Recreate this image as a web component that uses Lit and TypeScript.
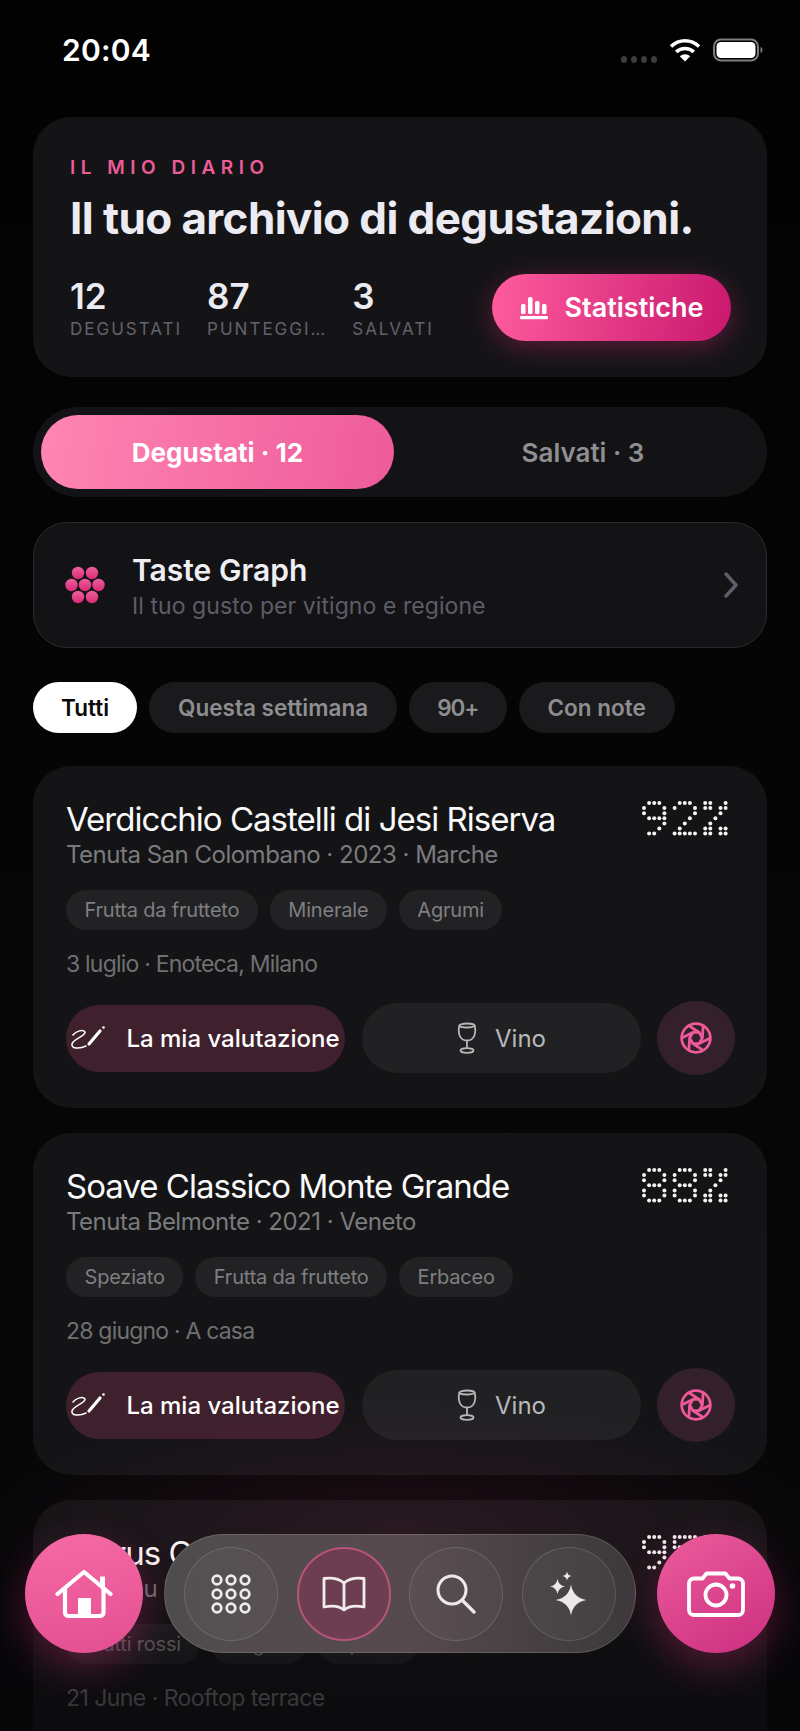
import { LitElement, html, css, svg } from "lit";
import { customElement } from "lit/decorators.js";

// dot matrix glyphs, 5 cols x 7 rows
const GLYPHS: Record<string, string[]> = {
  "9": [".###.", "#...#", "#...#", ".####", "....#", "...#.", ".##.."],
  "8": [".###.", "#...#", "#...#", ".###.", "#...#", "#...#", ".###."],
  "2": [".###.", "#...#", "....#", "...#.", "..#..", ".#...", "#####"],
  "5": ["#####", "#....", "####.", "....#", "....#", "#...#", ".###."],
  "%": ["##..#", "##.##", "...#.", "..#..", ".#...", "##.##", "##.##"],
};

interface Wine {
  name: string;
  sub: string;
  tags: string[];
  meta: string;
  score: string;
  actions: boolean;
}

const WINES: Wine[] = [
  {
    name: "Verdicchio Castelli di Jesi Riserva",
    sub: "Tenuta San Colombano · 2023 · Marche",
    tags: ["Frutta da frutteto", "Minerale", "Agrumi"],
    meta: "3 luglio · Enoteca, Milano",
    score: "92%",
    actions: true,
  },
  {
    name: "Soave Classico Monte Grande",
    sub: "Tenuta Belmonte · 2021 · Veneto",
    tags: ["Speziato", "Frutta da frutteto", "Erbaceo"],
    meta: "28 giugno · A casa",
    score: "88%",
    actions: true,
  },
  {
    // last card runs off the bottom, its buttons are never in view
    name: "Clarus Cuvée",
    sub: "Chateau Lune · 2020 · Bordeaux",
    tags: ["Frutti rossi", "Legno", "Spezie"],
    meta: "21 June · Rooftop terrace",
    score: "95%",
    actions: false,
  },
];

const star = (x: number, y: number, r: number) => {
  const k = r * 0.14;
  return `M${x} ${y - r}Q${x + k} ${y - k} ${x + r} ${y}Q${x + k} ${y + k} ${x} ${y + r}Q${x - k} ${y + k} ${x - r} ${y}Q${x - k} ${y - k} ${x} ${y - r}Z`;
};

const apertureBlades = () => {
  const lines = [];
  for (let i = 0; i < 6; i++) {
    const a = (Math.PI / 3) * i;
    const b = a + Math.PI / 3;
    const x1 = 16 + 13.5 * Math.cos(a);
    const y1 = 16 + 13.5 * Math.sin(a);
    const x2 = 16 + 6 * Math.cos(b);
    const y2 = 16 + 6 * Math.sin(b);
    const x3 = 16 + 6 * Math.cos(b + Math.PI / 3);
    const y3 = 16 + 6 * Math.sin(b + Math.PI / 3);
    lines.push(svg`<path d="M${x1} ${y1}L${x2} ${y2}L${x3} ${y3}"/>`);
  }
  return lines;
};

const icons = {
  wifi: html`<svg width="32" height="24" viewBox="0 0 32 24" fill="none" stroke="#fff" stroke-width="3.6">
    <path d="M2 8.5C10 .8 22 .8 30 8.5"/><path d="M7.2 14C12 9.4 20 9.4 24.8 14"/>
    <path d="M16 23.5L10.8 18.3C13.8 15.6 18.2 15.6 21.2 18.3Z" fill="#fff" stroke="none"/></svg>`,
  battery: html`<svg width="50" height="24" viewBox="0 0 50 24" fill="none">
    <rect x="1" y="1.5" width="44" height="21" rx="7" stroke="#7c7c7c" stroke-width="2"/>
    <rect x="3.5" y="4" width="39" height="16" rx="4.5" fill="#fff"/>
    <path d="M47.5 9v6c1.5-.5 2-1.7 2-3s-.5-2.500-2-3z" fill="#7c7c7c"/></svg>`,
  bars: html`<svg width="28" height="24" viewBox="0 0 28 24" fill="#fff">
    <rect x="1" y="8" width="4.500" height="10" rx="1.500"/><rect x="8" y="1" width="4.500" height="17" rx="1.500"/>
    <rect x="15" y="5" width="4.500" height="13" rx="1.500"/><rect x="22" y="8" width="4.500" height="10" rx="1.500"/>
    <rect x="0" y="20" width="28" height="3.200" rx="1"/></svg>`,
  grapes: html`<svg width="40" height="38" viewBox="0 0 40 38">
    <defs><linearGradient id="gr" x1="0" y1="0" x2="0" y2="1"><stop offset="0" stop-color="#ef5f9f"/><stop offset="1" stop-color="#d92a74"/></linearGradient></defs>
    <g fill="url(#gr)">
    <circle cx="13" cy="7" r="6.200"/><circle cx="27" cy="7" r="6.200"/>
    <circle cx="6.500" cy="19" r="6.200"/><circle cx="20" cy="19" r="6.200"/><circle cx="33.500" cy="19" r="6.200"/>
    <circle cx="13" cy="31" r="6.200"/><circle cx="27" cy="31" r="6.200"/></g></svg>`,
  chevron: html`<svg width="14" height="26" viewBox="0 0 14 26" fill="none" stroke="#5e5e68" stroke-width="3.400" stroke-linecap="round" stroke-linejoin="round"><path d="M2 2L12 13L2 24"/></svg>`,
  pen: html`<svg width="34" height="24" viewBox="0 0 34 24" fill="none" stroke="#fff" stroke-linecap="round">
    <path d="M2 9C5 5 12 3 14 6C15 10 2 13 1 18C0 23 9 23 15 20" stroke-width="1.500"/>
    <path d="M18 18L29 5" stroke-width="3.200"/><circle cx="32.500" cy="1.500" r="1.300" fill="#fff" stroke="none"/></svg>`,
  glass: html`<svg width="20" height="32" viewBox="0 0 20 32" fill="none" stroke="#b7b7ba" stroke-width="1.800">
    <path d="M2.500 3C0.500 11 2.500 18.500 10 18.500C17.500 18.500 19.500 11 17.500 3"/><ellipse cx="10" cy="3.500" rx="7.500" ry="2"/><path d="M10 18.500V26.500"/><ellipse cx="10" cy="28.500" rx="6.500" ry="2.400"/></svg>`,
  aperture: html`<svg width="34" height="34" viewBox="0 0 32 32" fill="none" stroke="#ef5a9b" stroke-width="2.600" stroke-linejoin="round">
    <circle cx="16" cy="16" r="13.500"/>${apertureBlades()}</svg>`,
  home: html`<svg width="58" height="50" viewBox="0 0 58 50" fill="none" stroke="#fff" stroke-width="4.200" stroke-linecap="round" stroke-linejoin="round">
    <path d="M2.500 25L29 3L55.500 25"/><path d="M10 19.500V43.500a3.500 3.500 0 0 0 3.500 3.500H45a3.500 3.500 0 0 0 3.500-3.500V19.500"/><path d="M47.500 7.500V18" stroke-width="5" stroke-linecap="butt"/>
    <rect x="23" y="29" width="13" height="17" fill="#fff" stroke="none"/></svg>`,
  camera: html`<svg width="58" height="46" viewBox="0 0 58 46" fill="none" stroke="#fff" stroke-width="3.800" stroke-linejoin="round">
    <path d="M7 7.500H15.500L19.500 2.500H38.500L42.500 7.500H51a5 5 0 0 1 5 5V39a5 5 0 0 1-5 5H7a5 5 0 0 1-5-5V12.500a5 5 0 0 1 5-5Z"/>
    <circle cx="29" cy="24" r="10.500"/><circle cx="45.500" cy="15" r="2.800" fill="#fff" stroke="none"/></svg>`,
  grid: html`<svg width="40" height="40" viewBox="0 0 40 40" fill="none" stroke="#efeaea" stroke-width="2.700">
    ${[6, 20, 34].map((y) => [6, 20, 34].map((x) => svg`<circle cx="${x}" cy="${y}" r="4.300"/>`))}</svg>`,
  book: html`<svg width="46" height="36" viewBox="0 0 46 36" fill="none" stroke="#f1ecec" stroke-width="2.800" stroke-linejoin="round" stroke-linecap="round">
    <path d="M23 7C18 2.500 10 1.500 3 2.500V31C10 29.500 18 29.500 23 34C28 29.500 36 29.500 43 31V2.500C36 1.500 28 2.500 23 7Z"/><path d="M23 7V33"/></svg>`,
  search: html`<svg width="42" height="42" viewBox="0 0 42 42" fill="none" stroke="#efeaea" stroke-width="3" stroke-linecap="round">
    <circle cx="17" cy="17" r="14"/><path d="M27.500 27.500L39 39" stroke-width="3.400"/></svg>`,
  sparkle: html`<svg width="37" height="45" viewBox="0 0 37 45" fill="#ece8e8">
    <path d="${star(21, 29, 15.5)}"/><path d="${star(7.5, 15.5, 7.5)}"/><path d="${star(17, 5, 4.6)}"/></svg>`,
};

const renderScore = (score: string) => {
  const pitch = 5.1;
  const dots = [...score].flatMap((ch, c) =>
    (GLYPHS[ch] ?? []).flatMap((row, r) =>
      [...row].map((cell, i) =>
        cell === "#" ? svg`<circle cx="${2 + (c * 6 + i) * pitch}" cy="${2 + r * pitch}" r="2"/>` : null,
      ),
    ),
  );
  return html`<div class="score">
    <svg width="88" height="36" viewBox="0 0 88 36" fill="#f4f4f4" aria-hidden="true">${dots}</svg>
    <span class="score-text">${score}</span>
  </div>`;
};

@customElement("app-root")
export class AppRoot extends LitElement {
  static styles = css`
    :host {
      display: block;
      position: relative;
      width: 800px;
      height: 1731px;
      overflow: hidden;
      background: #060607;
      font-family: Inter, "Liberation Sans", sans-serif;
      color: #fff;
    }
    .status {
      height: 117px;
      box-sizing: border-box;
      padding: 31px 37px 0 62px;
      display: flex;
      align-items: flex-start;
      background: #020203;
    }
    .time {
      font-size: 30px;
      font-weight: 600;
      line-height: 38px;
      letter-spacing: 0.2px;
      flex: 1;
    }
    .sig {
      display: flex;
      gap: 4px;
      margin: 25px 12px 0 0;
    }
    .sig i {
      width: 6px;
      height: 7px;
      border-radius: 50%;
      background: #3d3d3f;
    }
    .status svg {
      margin-top: 7px;
    }
    .status .wifi {
      margin-right: 12px;
    }
    .main {
      padding: 0 33px;
      display: flex;
      flex-direction: column;
      background: linear-gradient(#030304, #08080a);
    }
    .hero {
      height: 260px;
      box-sizing: border-box;
      padding: 41px 36px 0 37px;
      border-radius: 38px;
      background: #141417;
    }
    .eyebrow {
      font-size: 19px;
      font-weight: 600;
      line-height: 20px;
      letter-spacing: 5.5px;
      color: #ec5c98;
    }
    .headline {
      margin-top: 15px;
      font-size: 44px;
      font-weight: 700;
      line-height: 50px;
      letter-spacing: -0.6px;
      color: #ecebf1;
      white-space: nowrap;
    }
    .hero-row {
      margin-top: 31px;
      display: flex;
      align-items: center;
    }
    .stats {
      display: flex;
      gap: 25px;
      flex: 1;
    }
    .num {
      font-size: 35px;
      font-weight: 600;
      line-height: 36px;
      color: #ecebf1;
    }
    .lab {
      margin-top: 6px;
      font-size: 17px;
      line-height: 18px;
      letter-spacing: 2px;
      color: #62626c;
      white-space: nowrap;
    }
    .stat-btn {
      width: 239px;
      height: 67px;
      border-radius: 34px;
      display: flex;
      align-items: center;
      justify-content: center;
      gap: 17px;
      font-size: 27px;
      font-weight: 600;
      background: linear-gradient(100deg, #ff5c9e, #c9186e);
      box-shadow: 0 6px 26px rgba(226, 40, 120, 0.35);
    }
    .seg {
      margin-top: 30px;
      height: 90px;
      box-sizing: border-box;
      padding: 8px;
      border-radius: 45px;
      background: #131316;
      display: flex;
    }
    .seg div {
      flex: 1;
      display: flex;
      align-items: center;
      justify-content: center;
      padding-left: 13px;
      font-size: 26px;
      font-weight: 600;
      color: #8f8f92;
      border-radius: 37px;
    }
    .seg .on {
      flex: none;
      width: 353px;
      padding-left: 0;
      font-weight: 700;
      color: #fff;
      background: linear-gradient(100deg, #ff86b2, #ee5a9a);
    }
    .graph {
      margin-top: 25px;
      height: 126px;
      box-sizing: border-box;
      padding: 0 28px 0 31px;
      border: 1px solid #2b2b2f;
      border-radius: 34px;
      background: #131316;
      display: flex;
      align-items: center;
      gap: 27px;
    }
    .graph-text {
      flex: 1;
      padding-top: 4px;
    }
    .graph-title {
      font-size: 30px;
      font-weight: 600;
      line-height: 38px;
      color: #efeef3;
    }
    .graph-sub {
      font-size: 23px;
      line-height: 34px;
      letter-spacing: 0.07px;
      color: #5d5d68;
    }
    .chips {
      margin-top: 34px;
      display: flex;
      gap: 12px;
    }
    .chip {
      height: 51px;
      padding: 0 29px;
      display: flex;
      align-items: center;
      border-radius: 26px;
      background: #1a1a1c;
      color: #8e8e90;
      font-size: 22.5px;
      font-weight: 600;
    }
    .chip.on {
      background: #fff;
      color: #0a0a0a;
      padding: 0 28px;
    }
    .chip.tight {
      padding: 0 28px;
      letter-spacing: -1px;
    }
    .cards {
      margin-top: 33px;
      display: flex;
      flex-direction: column;
      gap: 25px;
    }
    .card {
      height: 342px;
      box-sizing: border-box;
      padding: 33px 32px 0 33px;
      border-radius: 38px;
      background: #141416;
    }
    .card-head {
      display: flex;
      justify-content: space-between;
      align-items: flex-start;
    }
    .name {
      font-size: 33px;
      line-height: 40px;
      letter-spacing: -0.98px;
      color: #fafafa;
    }
    .sub {
      margin-top: 1px;
      font-size: 24px;
      line-height: 30px;
      letter-spacing: -0.5px;
      color: #7b7b7d;
    }
    .score {
      position: relative;
      margin: 2px 5px 0 0;
      width: 88px;
      height: 36px;
    }
    .score-text {
      position: absolute;
      inset: 0;
      font-size: 30px;
      line-height: 36px;
      color: transparent;
      white-space: nowrap;
    }
    .tags {
      margin-top: 20px;
      display: flex;
      gap: 12px;
    }
    .tag {
      height: 40px;
      padding: 0 18.5px;
      display: flex;
      align-items: center;
      border-radius: 20px;
      background: #222224;
      color: #7f7f81;
      font-size: 20px;
      letter-spacing: -0.2px;
    }
    .meta {
      margin-top: 19px;
      font-size: 23px;
      line-height: 30px;
      letter-spacing: -0.8px;
      color: #707072;
    }
    .card:last-child .meta {
      letter-spacing: -0.55px;
    }
    .actions {
      margin-top: 22px;
      height: 74px;
      display: flex;
      align-items: center;
      gap: 17px;
    }
    .act {
      width: 279px;
      display: flex;
      align-items: center;
      justify-content: center;
      font-size: 24px;
      border-radius: 36px;
      white-space: nowrap;
    }
    .rate {
      height: 67px;
      gap: 21px;
      background: #3f202d;
      font-weight: 500;
      color: #fff;
    }
    .wine {
      height: 70px;
      gap: 18px;
      background: #212123;
      color: #b9b9bb;
    }
    .shot {
      margin-left: -1px;
      width: 78px;
      height: 74px;
      border-radius: 50%;
      background: #33202a;
      display: flex;
      align-items: center;
      justify-content: center;
    }
    .fade {
      position: absolute;
      left: 0;
      right: 0;
      bottom: 0;
      height: 340px;
      pointer-events: none;
      background: radial-gradient(ellipse 420px 130px at 50% 140px, rgba(226, 60, 120, 0.1), transparent),
        linear-gradient(rgba(6, 6, 8, 0) 50%, rgba(6, 6, 8, 0.4) 75%, rgba(6, 6, 8, 0.6));
    }
    .nav {
      position: absolute;
      left: 25px;
      right: 25px;
      top: 1534px;
      display: flex;
      justify-content: space-between;
    }
    .fab {
      width: 118px;
      height: 119px;
      border-radius: 50%;
      display: flex;
      align-items: center;
      justify-content: center;
    }
    .fab.l {
      background: linear-gradient(170deg, #f66aa4, #e34f92);
      box-shadow: 0 14px 40px rgba(226, 50, 125, 0.32);
    }
    .fab.r {
      background: linear-gradient(150deg, #ec5c9c, #cc2f80);
      box-shadow: 0 14px 40px rgba(226, 50, 125, 0.32);
    }
    .dock {
      width: 472px;
      height: 119px;
      box-sizing: border-box;
      border-radius: 60px;
      padding: 0 19px;
      display: flex;
      align-items: center;
      justify-content: space-between;
      border: 1px solid rgba(255, 255, 255, 0.14);
      background: linear-gradient(90deg, #4f4c4d, #574a4f 50%, #3b393b);
    }
    .dock div {
      width: 94px;
      height: 94px;
      box-sizing: border-box;
      border-radius: 50%;
      display: flex;
      align-items: center;
      justify-content: center;
      border: 1.5px solid rgba(255, 255, 255, 0.13);
      background: rgba(255, 255, 255, 0.03);
    }
    .dock .on {
      border: 2px solid #b65578;
      background: #6d3d52;
    }
  `;

  renderCard(w: Wine) {
    return html`<article class="card">
      <div class="card-head">
        <div>
          <div class="name">${w.name}</div>
          <div class="sub">${w.sub}</div>
        </div>
        ${renderScore(w.score)}
      </div>
      <div class="tags">${w.tags.map((t) => html`<span class="tag">${t}</span>`)}</div>
      <div class="meta">${w.meta}</div>
      ${w.actions
        ? html`<div class="actions">
            <div class="act rate">${icons.pen}<span>La mia valutazione</span></div>
            <div class="act wine">${icons.glass}<span>Vino</span></div>
            <div class="shot">${icons.aperture}</div>
          </div>`
        : null}
    </article>`;
  }

  render() {
    return html`
      <div class="status">
        <div class="time">20:04</div>
        <div class="sig"><i></i><i></i><i></i><i></i></div>
        <span class="wifi">${icons.wifi}</span>
        <span>${icons.battery}</span>
      </div>
      <div class="main">
        <section class="hero">
          <div class="eyebrow">IL MIO DIARIO</div>
          <div class="headline">Il tuo archivio di degustazioni.</div>
          <div class="hero-row">
            <div class="stats">
              <div><div class="num">12</div><div class="lab">DEGUSTATI</div></div>
              <div><div class="num">87</div><div class="lab">PUNTEGGI…</div></div>
              <div><div class="num">3</div><div class="lab">SALVATI</div></div>
            </div>
            <div class="stat-btn">${icons.bars}<span>Statistiche</span></div>
          </div>
        </section>
        <div class="seg">
          <div class="on">Degustati · 12</div>
          <div>Salvati · 3</div>
        </div>
        <div class="graph">
          ${icons.grapes}
          <div class="graph-text">
            <div class="graph-title">Taste Graph</div>
            <div class="graph-sub">Il tuo gusto per vitigno e regione</div>
          </div>
          ${icons.chevron}
        </div>
        <div class="chips">
          <span class="chip on">Tutti</span>
          <span class="chip">Questa settimana</span>
          <span class="chip tight">90+</span>
          <span class="chip">Con note</span>
        </div>
        <div class="cards">${WINES.map((w) => this.renderCard(w))}</div>
      </div>
      <div class="fade"></div>
      <nav class="nav">
        <div class="fab l">${icons.home}</div>
        <div class="dock">
          <div>${icons.grid}</div>
          <div class="on">${icons.book}</div>
          <div>${icons.search}</div>
          <div>${icons.sparkle}</div>
        </div>
        <div class="fab r">${icons.camera}</div>
      </nav>
    `;
  }
}
